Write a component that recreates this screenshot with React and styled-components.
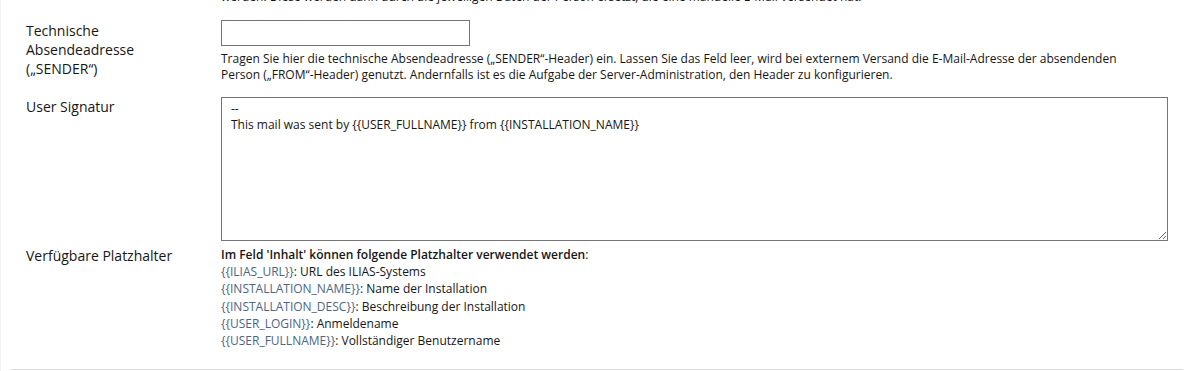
import styled, { createGlobalStyle } from 'styled-components';

const GlobalStyle = createGlobalStyle`
  html, body {
    margin: 0;
    padding: 0;
    background: #ffffff;
  }

  body {
    font-family: "Open Sans", "Noto Sans", sans-serif;
    color: #161616;
    overflow: hidden;
  }
`;

const Page = styled.div`
  height: 371px;
  border-left: 1px solid #f2f2f2;
  box-sizing: border-box;
  overflow: hidden;
`;

const Form = styled.div`
  margin: -11px 10px 0 10px;
  border-bottom: 1px solid #dddddd;
  padding-bottom: 20px;
`;

const Row = styled.div`
  display: grid;
  grid-template-columns: 195px 1fr;
  padding-top: ${(p) => p.$top || 0}px;
`;

const Label = styled.div`
  padding: 0 15px;
  font-size: 14px;
  line-height: 19px;
  padding-top: ${(p) => p.$offset || 0}px;
`;

const Field = styled.div`
  padding: 0 15px;
  display: flex;
  flex-direction: column;
  align-items: ${(p) => (p.$stretch ? 'stretch' : 'flex-start')};
`;

const HelpText = styled.div`
  max-width: 925px;
  font-size: 12px;
  line-height: 16px;
  color: #161616;
  margin-top: ${(p) => p.$top || 0}px;
`;

const TextInput = styled.input`
  width: 249px;
  height: 26px;
  box-sizing: border-box;
  border: 1px solid #757575;
  border-radius: 0;
  padding: 3px 6px;
  font-family: inherit;
  font-size: 12px;
  outline: none;
`;

const TextArea = styled.textarea`
  width: 100%;
  height: 144px;
  box-sizing: border-box;
  border: 1px solid #757575;
  border-radius: 0;
  padding: 3px 9px;
  font-family: "Open Sans", "Noto Sans", sans-serif;
  font-size: 12px;
  line-height: 16px;
  color: #161616;
  outline: none;
`;

const PlaceholderList = styled.div`
  font-size: 12px;
  line-height: 17.2px;
`;

const Intro = styled.div`
  b {
    font-weight: 600;
  }
`;

const Token = styled.span`
  color: #4c6586;
`;

const placeholders = [
  ['ILIAS_URL', 'URL des ILIAS-Systems'],
  ['INSTALLATION_NAME', 'Name der Installation'],
  ['INSTALLATION_DESC', 'Beschreibung der Installation'],
  ['USER_LOGIN', 'Anmeldename'],
  ['USER_FULLNAME', 'Vollständiger Benutzername'],
];

const signature = '--\nThis mail was sent by {{USER_FULLNAME}} from {{INSTALLATION_NAME}}';

export default function App() {
  return (
    <Page>
      <GlobalStyle />
      <Form>
        <Row>
          <div />
          <Field>
            <HelpText>
              werden. Diese werden dann durch die jeweiligen Daten der Person ersetzt, die eine manuelle E-Mail versendet hat.
            </HelpText>
          </Field>
        </Row>

        <Row $top={15}>
          <Label $offset={1}>Technische Absendeadresse („SENDER“)</Label>
          <Field>
            <TextInput type="text" />
            <HelpText $top={5}>
              Tragen Sie hier die technische Absendeadresse („SENDER“-Header) ein. Lassen Sie das Feld leer, wird bei externem Versand die E-Mail-Adresse der absendenden Person („FROM“-Header) genutzt. Andernfalls ist es die Aufgabe der Server-Administration, den Header zu konfigurieren.
            </HelpText>
          </Field>
        </Row>

        <Row $top={14}>
          <Label>User Signatur</Label>
          <Field $stretch>
            <TextArea defaultValue={signature} />
          </Field>
        </Row>

        <Row $top={5}>
          <Label>Verfügbare Platzhalter</Label>
          <Field>
            <PlaceholderList>
              <Intro>
                <b>Im Feld 'Inhalt' können folgende Platzhalter verwendet werden</b>:
              </Intro>
              {placeholders.map(([key, text]) => (
                <div key={key}>
                  <Token>{`{{${key}}}`}</Token>: {text}
                </div>
              ))}
            </PlaceholderList>
          </Field>
        </Row>
      </Form>
    </Page>
  );
}
